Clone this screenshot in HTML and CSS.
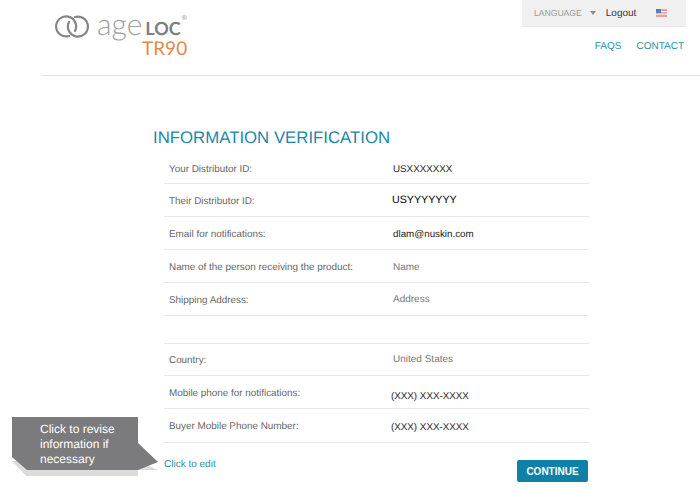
FILE: index.html
```html
<!DOCTYPE html>
<html lang="en">
<head>
<meta charset="utf-8">
<title>Information Verification</title>
<link rel="stylesheet" href="styles.css">
</head>
<body>
<div class="page">
  <header class="header">
    <div class="logo">
      <svg class="rings" width="34" height="24" viewBox="0 0 34 24" aria-hidden="true">
        <path d="M14 21A10 10 0 1 1 20 16" fill="none" stroke="#858585" stroke-width="2.2" stroke-linecap="round"/>
        <path d="M20 2A10 10 0 1 1 14 7" fill="none" stroke="#858585" stroke-width="2.2" stroke-linecap="round"/>
      </svg>
      <div class="wordmark">
        <div class="brand"><span class="age">age</span><span class="loc">LOC</span><sup class="reg">®</sup></div>
        <div class="tr90">TR90</div>
      </div>
    </div>
    <div class="utility">
      <div class="topbar">
        <span class="lang">LANGUAGE</span>
        <span class="caret"></span>
        <span class="logout">Logout</span>
        <svg class="flag" width="11" height="8" viewBox="0 0 11 8" aria-hidden="true">
          <rect width="11" height="8" fill="#e8a0a8"/>
          <rect y="2" width="11" height="1.2" fill="#f6e6e6"/>
          <rect y="4.6" width="11" height="1.2" fill="#f6e6e6"/>
          <rect width="5" height="4" fill="#6478b4"/>
        </svg>
      </div>
      <nav class="nav"><a>FAQS</a><a>CONTACT</a></nav>
    </div>
  </header>

  <main class="main">
    <h1 class="title">INFORMATION VERIFICATION</h1>
    <div class="rows">
      <div class="row r1"><span class="label">Your Distributor ID:</span><span class="value dark">USXXXXXXX</span></div>
      <div class="row"><span class="label">Their Distributor ID:</span><span class="value black">USYYYYYYY</span></div>
      <div class="row"><span class="label">Email for notifications:</span><span class="value dark">dlam@nuskin.com</span></div>
      <div class="row"><span class="label">Name of the person receiving the product:</span><span class="value">Name</span></div>
      <div class="row"><span class="label">Shipping Address:</span><span class="value up">Address</span></div>
      <div class="row spacer"></div>
      <div class="row country"><span class="label">Country:</span><span class="value up">United States</span></div>
      <div class="row"><span class="label">Mobile phone for notifications:</span><span class="value dark phone low">(XXX) XXX-XXXX</span></div>
      <div class="row last"><span class="label">Buyer Mobile Phone Number:</span><span class="value dark phone">(XXX) XXX-XXXX</span></div>
    </div>
    <div class="actions">
      <a class="edit">Click to edit</a>
      <button class="continue" type="button">CONTINUE</button>
    </div>
  </main>

  <div class="callout">
    <svg class="callout-shape" width="148" height="60" viewBox="0 0 148 60" aria-hidden="true">
      <polygon points="0,44 14,59 126,59 126,53 146,53 126,44" fill="#dcdcdc"/>
      <polygon points="0,0 126,0 126,26 146,45 126,53 15,53 0,40" fill="#7b7a7c"/>
    </svg>
    <p class="callout-text">Click to revise information if necessary</p>
  </div>
</div>
</body>
</html>
```

FILE: styles.css
```css
* { box-sizing: border-box; }
html, body { margin: 0; padding: 0; background: #fff; }
body { font-family: "Liberation Sans", Arial, sans-serif; text-rendering: geometricPrecision; }
.page { position: relative; width: 700px; height: 489px; overflow: hidden; }

.header {
  display: flex;
  justify-content: space-between;
  height: 76px;
  margin-left: 41px;
  padding: 0 14px 0 14px;
  border-bottom: 1px solid #e2e2e2;
}
.logo { display: flex; align-items: flex-start; gap: 8px; padding-top: 15px; }
.wordmark { display: flex; flex-direction: column; margin-top: -4px; }
.brand { display: flex; align-items: baseline; height: 26px; line-height: 26px; color: #8a8a8a; }
.age { font-family: Lato, sans-serif; font-weight: 300; font-size: 30px; color: #a0a0a0; }
.loc { font-family: Lato, sans-serif; font-weight: 700; font-size: 18px; margin-left: 3px; color: #808080; }
.reg { font-size: 7px; line-height: 7px; align-self: flex-start; margin-top: 4px; margin-left: 1px; }
.tr90 { font-family: Lato, sans-serif; font-weight: 400; font-size: 19px; line-height: 20px; color: #e08a50; margin-left: 45px; margin-top: 2px; }

.utility { display: flex; flex-direction: column; align-items: flex-end; width: 164px; }
.topbar {
  display: flex;
  align-items: center;
  width: 164px;
  height: 27px;
  padding-left: 12px;
  background: #f0f0f0;
  border-bottom: 1px solid #e6e6e6;
}
.lang { font-size: 8.6px; color: #9a9a9a; }
.caret {
  width: 0; height: 0;
  margin-left: 8px;
  border-left: 3.5px solid transparent;
  border-right: 3.5px solid transparent;
  border-top: 4px solid #8c8c8c;
}
.logout { font-size: 10px; color: #333; margin-left: 10px; }
.flag { margin-left: 20px; }
.nav { display: flex; gap: 15px; margin-top: 14px; padding-right: 2px; font-size: 10px; line-height: 12px; color: #2a8fa6; }

.main { margin-left: 153px; width: 436px; }
.title {
  margin: 52px 0 0;
  font-size: 16.8px;
  line-height: 20px;
  font-weight: 400;
  color: #1d87a8;
}
.rows { margin-left: 11px; margin-top: 8px; }
.row {
  display: grid;
  grid-template-columns: 224px 1fr;
  align-items: center;
  height: 33px;
  padding: 2px 0 0 5px;
  border-bottom: 1px solid #e8e8e8;
}
.r1 { height: 28px; padding-top: 0; }
.spacer { height: 28px; }
.country { height: 32px; }
.last { height: 34px; }
.label { font-size: 9.9px; color: #666; }
.value { font-size: 10px; color: #777; }
.up { margin-top: -2px; }
.dark { color: #222; font-size: 9.8px; }
.black { color: #000; font-size: 10.7px; margin: -2px 0 0 -1px; }
.phone { margin: 2px 0 0 -2px; }
.low { margin-top: 6px; }

.actions { display: flex; justify-content: space-between; align-items: flex-start; margin-left: 11px; padding-top: 16px; }
.edit { font-size: 10px; line-height: 12px; color: #2a8fa6; }
.continue {
  width: 71px;
  height: 22px;
  margin: 1px 1px 0 0;
  border: 0;
  border-radius: 2px;
  background: #0f80a6;
  color: #fff;
  font: 700 10px "Liberation Sans", Arial, sans-serif;
}

.callout { position: absolute; left: 12px; top: 417px; width: 148px; height: 60px; }
.callout-shape { position: absolute; left: 0; top: 0; }
.callout-text {
  position: relative;
  margin: 0;
  padding: 5px 0 0 28px;
  width: 122px;
  font-size: 12px;
  line-height: 15px;
  color: #fff;
}
```
